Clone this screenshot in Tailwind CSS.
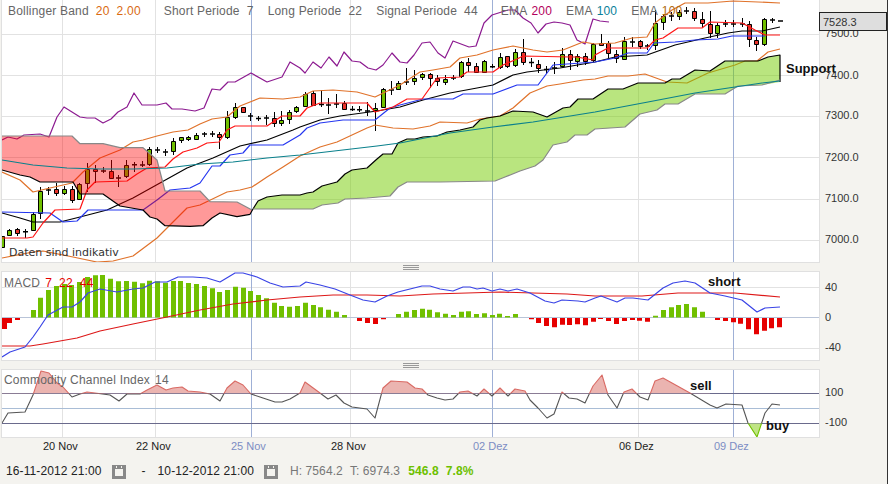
<!DOCTYPE html>
<html>
<head>
<meta charset="utf-8">
<script src="https://cdn.jsdelivr.net/npm/@tailwindcss/browser@4"></script>
</head>
<body>
<div class="w-[895px] h-[484px] flex bg-white overflow-hidden font-['Liberation_Sans',Arial,sans-serif] text-[#333]">
  <div class="w-[888px] h-full flex flex-col bg-[#f4f3ef] border-r border-[#333] pl-[1px]">

    <!-- Price pane -->
    <div class="flex h-[263px]">
      <div class="relative w-[819px] border-l border-r border-b border-[#e0e0e0] bg-white">
        <svg class="block" width="817" height="262" viewBox="2 0 817 262" fill="none" stroke-linejoin="round">
          <path stroke="#e2e2e2" d="M2 34.5H819M2 75.5H819M2 116.5H819M2 157.5H819M2 199.5H819M2 240.5H819M62.5 0V262M155.5 0V262M350.5 0V262M638.5 0V262"/>
          <path stroke="#9fb0d6" d="M251.5 0V262M492.5 0V262M733.5 0V262"/>
          <!-- wicks -->
          <path stroke="#000" d="M9.5 229V236M17.5 228V236M25.5 229V238M33.5 212V231M40.5 187V219M48.5 187V195M56.5 183V196M64.5 186V195M72.5 186V203M79.5 183V200M87.5 163V192M95.5 165V183M103.5 167V173M111.5 160V178M118.5 175V187M126.5 160V178M134.5 162V172M142.5 161V167M149.5 147V166M157.5 147V153M165.5 149V156M173.5 138V155M181.5 137V143M188.5 136V141M196.5 133V140M204.5 132V137M212.5 131V137M219.5 132V149M227.5 111V139M235.5 103V119M250.5 113V121M258.5 116V121M266.5 115V125M274.5 112V127M281.5 111V126M289.5 110V124M296.5 106V113M305.5 92V107M313.5 91V106M321.5 90V107M328.5 98V114M336.5 94V108M344.5 101V110M352.5 106V111M359.5 106V112M367.5 102V116M375.5 103V131M383.5 88V108M391.5 81V95M398.5 81V90M406.5 68V85M414.5 70V85M422.5 73V80M430.5 73V88M437.5 75V86M445.5 75V85M453.5 75V80M461.5 61V78M468.5 58V72M476.5 63V73M484.5 60V73M492.5 64V68M500.5 53V69M507.5 56V68M515.5 49V67M523.5 39V65M531.5 58V67M538.5 60V73M546.5 66V74M554.5 62V74M562.5 48V67M570.5 50V70M577.5 54V67M585.5 53V65M593.5 43V62M601.5 34V46M608.5 41V58M616.5 50V63M624.5 37V60M632.5 37V47M640.5 40V49M647.5 44V50M655.5 10V50M663.5 15V30M671.5 12V21M679.5 10V20M686.5 7V14M694.5 8V21M702.5 12V27M710.5 11V38M717.5 23V38M725.5 20V27M733.5 20V27M742.5 18V27M749.5 21V47M756.5 37V51M764.5 18V46M772.5 18V23"/>
          <!-- dojis -->
          <path stroke="#000" stroke-width="1.5" d="M23 231.7h5M46 190h5M101 171h5M116 178h5M132 164.7h5M140 165h5M155 150h5M163 152h5M202 134h5M210 134h5M248 116h5M256 118.5h5M264 118h5M319 104.5h5M326 105h5M334 104h5M350 109.5h5M357 109.7h5M365 111h5M389 90h5M404 82h5M451 78h5M490 66.7h5M529 62.5h5M544 69.5h5M552 68h5M630 42h5M645 46h5M669 16h5M684 11h5M723 24h5M731 24h5M740 24h5M770 20h5M778 21h5"/>
          <!-- green bodies -->
          <path fill="#70c000" stroke="#000" d="M.5 236.5h4V247.5h-4zM7.5 230.5h4V235.5h-4zM31.5 214.5h4V230.5h-4zM38.5 191.5h4V213.5h-4zM62.5 189.5h4V193.5h-4zM77.5 184.5h4V199.5h-4zM85.5 169.5h4V183.5h-4zM124.5 165.5h4V176.5h-4zM147.5 149.5h4V164.5h-4zM171.5 141.5h4V151.5h-4zM179.5 137.5h4V140.5h-4zM186.5 137.5h4V139.5h-4zM194.5 135.5h4V139.5h-4zM225.5 117.5h4V137.5h-4zM233.5 107.5h4V117.5h-4zM279.5 120.5h4V123.5h-4zM287.5 112.5h4V119.5h-4zM294.5 107.5h4V111.5h-4zM303.5 94.5h4V106.5h-4zM373.5 108.5h4V110.5h-4zM381.5 89.5h4V107.5h-4zM396.5 83.5h4V89.5h-4zM412.5 78.5h4V81.5h-4zM420.5 74.5h4V77.5h-4zM443.5 79.5h4V82.5h-4zM459.5 62.5h4V76.5h-4zM482.5 61.5h4V72.5h-4zM498.5 57.5h4V67.5h-4zM513.5 52.5h4V65.5h-4zM560.5 54.5h4V66.5h-4zM575.5 56.5h4V61.5h-4zM591.5 44.5h4V60.5h-4zM622.5 41.5h4V59.5h-4zM653.5 23.5h4V45.5h-4zM661.5 16.5h4V22.5h-4zM677.5 12.5h4V16.5h-4zM715.5 25.5h4V33.5h-4zM762.5 19.5h4V44.5h-4z"/>
          <!-- red bodies -->
          <path fill="#e8342c" stroke="#000" d="M15.5 229.5h4V233.5h-4zM54.5 189.5h4V193.5h-4zM70.5 189.5h4V200.5h-4zM93.5 169.5h4V171.5h-4zM109.5 171.5h4V178.5h-4zM217.5 134.5h4V137.5h-4zM241.5 107.5h4V112.5h-4zM272.5 118.5h4V123.5h-4zM311.5 93.5h4V105.5h-4zM342.5 103.5h4V109.5h-4zM428.5 74.5h4V78.5h-4zM435.5 78.5h4V81.5h-4zM466.5 62.5h4V65.5h-4zM474.5 66.5h4V72.5h-4zM505.5 56.5h4V66.5h-4zM521.5 52.5h4V62.5h-4zM536.5 64.5h4V68.5h-4zM568.5 54.5h4V60.5h-4zM583.5 56.5h4V61.5h-4zM599.5 43.5h4V45.5h-4zM606.5 43.5h4V53.5h-4zM614.5 54.5h4V58.5h-4zM638.5 41.5h4V46.5h-4zM692.5 11.5h4V18.5h-4zM700.5 19.5h4V23.5h-4zM708.5 24.5h4V33.5h-4zM747.5 24.5h4V39.5h-4zM754.5 40.5h4V44.5h-4z"/>
          <!-- purple -->
          <polyline stroke="#8c1a90" stroke-width="1.2" points="2,140 8,137 17,139 24,135 40,134 49,137 57,117 64,107 80,117 87,118 95,118 103,123 111,119 118,112 127,107 134,93 142,105 157,105 166,103 172,109 182,109 195,111 204,108 212,89 220,90 228,82 235,82 251,73 267,82 282,77 290,62 300,68 305,73 313,62 321,68 329,57 337,66 344,52 352,61 360,62 368,68 376,70 383,65 392,53 400,62 407,63 414,55 422,43 430,42 438,53 445,58 453,41 469,47 476,46 484,23 492,15 508,10 515,10 523,18 531,23 538,33 546,24 554,22 562,23 570,25 577,40 585,44 593,19 600,21 609,22"/>
          <!-- orange upper -->
          <polyline stroke="#e0722a" stroke-width="1.2" points="2,172 20,180 33,192 50,188 72,183 83,172 100,158 120,150 133,142 143,140 157,136 173,132 188,130 200,124 212,119 227,117 240,106 260,98 283,99 300,97 313,91 333,90 357,92 375,97 400,85 420,72 433,70 450,67 460,58 477,55 493,50 513,46 533,50 547,52 563,50 583,42 595,44 615,43 632,38 647,37 655,23 672,10 685,3 708,3 733,1 758,2 780,3"/>
          <!-- orange lower -->
          <polyline stroke="#e0722a" stroke-width="1.2" points="2,258 33,252 43,251 73,257 97,262 113,261 133,256 157,238 187,208 200,205 227,192 240,190 252,187 267,177 283,167 300,156 320,147 337,142 367,128 375,125 393,128 413,129 430,126 440,122 467,123 480,119 500,116 513,108 530,93 547,86 560,84 583,80 595,79 608,76 628,76 645,74 667,82 687,83 708,73 735,65 745,61 757,61 768,52 780,49"/>
          <!-- black -->
          <polyline stroke="#000" stroke-width="1.2" points="2,213 20,218 33,222 60,222 80,217 107,210 133,198 160,183 187,168 213,158 240,146 267,140 293,130 300,127 320,120 340,116 377,111 400,107 423,100 450,93 477,88 493,85 513,75 527,72 560,68 595,62 615,57 647,55 675,45 705,38 728,33 742,31 762,31 780,27"/>
          <!-- blue -->
          <polyline stroke="#2436f0" stroke-width="1.2" points="2,212 50,213 63,222 77,221 88,210 143,210 157,200 170,190 190,188 200,183 212,166 220,166 230,155 243,153 250,145 283,145 300,135 307,128 320,123 343,120 375,120 390,108 400,105 423,99 453,99 463,94 493,94 517,85 538,85 553,65 595,62 615,58 628,53 647,53 654,43 675,42 695,40 718,39 732,36 765,36"/>
          <!-- red -->
          <polyline stroke="#ff1414" stroke-width="1.2" points="2,238 27,238 33,237 43,223 55,210 80,209 87,190 95,182 127,181 137,174 147,168 165,167 173,159 183,152 197,148 207,143 219,142 227,130 235,126 267,126 282,116 300,116 307,108 320,103 343,103 367,103 375,112 393,107 407,99 422,99 437,78 460,77 467,72 493,72 503,65 517,59 523,56 570,57 577,57 593,60 595,55 608,48 647,48 655,40 663,38 678,28 702,28 710,22 742,23 755,30 765,35 780,35"/>
          <!-- red cloud -->
          <path fill="#ff0000" fill-opacity=".4" d="M2 136H72L80 143.7H103L120 147.7H143L148 152L157 160L165 191H200L210 201.7L237 202L252 210L250 214.3L237 216.7L220 213L212 218L203 225.7L190 226.3L165 225.7L157 219L150 217L143 210L120 206L103 194H80L73 182H40L30 177L20 175L2 170Z"/>
          <path stroke="#888" stroke-width="1.2" d="M2 136H72L80 143.7H103L120 147.7H143L148 152L157 160L165 191H200L210 201.7L237 202L252 210"/>
          <path stroke="#000" stroke-width="1.2" d="M2 170L20 175L30 177L40 182H73L80 194H103L120 206L143 210L150 217L157 219L165 225.7L190 226.3L203 225.7L212 218L220 213L237 216.7L250 214.3L253 209"/>
          <!-- green cloud -->
          <path fill="#74cc00" fill-opacity=".5" d="M253 209L258 201L267 197L282 195H300L307 193L313 192L322 186L337 182L345 174L352 170L367 168L377 159L383 154H392L398 143L407 139H415L423 137L437 136L447 132L460 130L473 127L480 120L487 118L500 116L513 111L533 112L547 117L563 108L570 107L578 99L593 99L608 89H623L638 83H665L672 79H680L695 70L710 71L725 61H742L758 61L768 57L780 55V82L762 85L738 86L725 94H695L678 104H665L657 110L640 114L625 127L595 129L587 135H575L567 142L553 145L543 160L535 166L520 171L505 177L495 181L440 182H407L398 187L390 196L367 198L345 199L338 203L322 205L313 209Z"/>
          <path stroke="#000" stroke-width="1.2" d="M253 209L258 201L267 197L282 195H300L307 193L313 192L322 186L337 182L345 174L352 170L367 168L377 159L383 154H392L398 143L407 139H415L423 137L437 136L447 132L460 130L473 127L480 120L487 118L500 116L513 111L533 112L547 117L563 108L570 107L578 99L593 99L608 89H623L638 83H665L672 79H680L695 70L710 71L725 61H742L758 61L768 57L780 55V82"/>
          <path stroke="#888" stroke-width="1.2" d="M780 80L762 85L738 86L725 94H695L678 104H665L657 110L640 114L625 127L595 129L587 135H575L567 142L553 145L543 160L535 166L520 171L505 177L495 181L440 182H407L398 187L390 196L367 198L345 199L338 203L322 205L313 209H253"/>
          <!-- teal -->
          <polyline stroke="#0a808c" stroke-width="1.1" points="2,160 33,165 67,168 100,169 133,169 167,168 200,164 233,162 267,158 300,155 377,146 400,143 450,133 493,127 533,122 595,112 648,102 695,93 735,87 762,83 780,81"/>
        </svg>
        <!-- legend -->
        <div class="absolute left-[6px] top-[4px] flex whitespace-nowrap text-[12px] leading-[15px] tracking-[0.2px] text-[#666]">
          <span>Bollinger Band</span><span class="ml-[7px] text-[#d96a10]">20</span><span class="ml-[7px] text-[#d96a10]">2.00</span>
          <span class="ml-[23px]">Short Periode</span><span class="ml-[7px]">7</span>
          <span class="ml-[14px]">Long Periode</span><span class="ml-[7px]">22</span>
          <span class="ml-[14px]">Signal Periode</span><span class="ml-[7px]">44</span>
          <span class="ml-[23px]">EMA</span><span class="ml-[4px] text-[#b3005c]">200</span>
          <span class="ml-[14px]">EMA</span><span class="ml-[4px] text-[#0a7f9a]">100</span>
          <span class="ml-[14px]">EMA</span><span class="ml-[4px] text-[#b06a10]">100</span>
        </div>
        <div class="absolute left-[7px] top-[246px] font-['DejaVu_Sans',sans-serif] text-[11px] leading-[14px] text-[#333]">Daten sind indikativ</div>
        <div class="absolute left-[784px] top-[61px] font-bold text-[13px] leading-[16px] text-[#111]">Support</div>
      </div>
      <div class="relative flex-1 text-[11px] leading-[13px]">
        <span class="absolute left-[5px] top-[27px]">7500.0</span>
        <span class="absolute left-[5px] top-[69px]">7400.0</span>
        <span class="absolute left-[5px] top-[109px]">7300.0</span>
        <span class="absolute left-[5px] top-[151px]">7200.0</span>
        <span class="absolute left-[5px] top-[192px]">7100.0</span>
        <span class="absolute left-[5px] top-[233px]">7000.0</span>
        <div class="absolute -left-[1px] top-[12px] w-[68px] h-[19px] border border-[#222] bg-[#dedede] pl-[3px] text-[#333] leading-[19px]">7528.3</div>
      </div>
    </div>

    <!-- divider -->
    <div class="w-[819px] h-[8px] flex items-center justify-center">
      <div class="w-[16px] h-[5px] border-y border-[#999] flex items-center"><div class="w-full h-[1px] bg-[#999]"></div></div>
    </div>

    <!-- MACD pane -->
    <div class="flex h-[90px]">
      <div class="relative w-[819px] border border-[#e0e0e0] bg-white">
        <svg class="block" width="817" height="88" viewBox="2 272 817 88" fill="none" stroke-linejoin="round">
          <path stroke="#e2e2e2" d="M2 287.5H819M2 348.5H819M62.5 272V360M155.5 272V360M350.5 272V360M638.5 272V360"/>
          <path stroke="#b9c4d8" d="M2 317.5H819"/>
          <path stroke="#9fb0d6" d="M251.5 272V360M492.5 272V360M733.5 272V360"/>
          <path fill="#70c000" d="M31 310h5V317.5h-5zM38 297.7h5V317.5h-5zM46 290h5V317.5h-5zM54 286h5V317.5h-5zM62 284h5V317.5h-5zM69 285h5V317.5h-5zM77 282h5V317.5h-5zM85 277h5V317.5h-5zM93 275.3h5V317.5h-5zM100 275h5V317.5h-5zM108 278.7h5V317.5h-5zM116 281.3h5V317.5h-5zM124 281h5V317.5h-5zM132 281.7h5V317.5h-5zM140 283.3h5V317.5h-5zM147 280.7h5V317.5h-5zM155 281.3h5V317.5h-5zM163 282.7h5V317.5h-5zM171 281h5V317.5h-5zM178 281h5V317.5h-5zM186 283h5V317.5h-5zM194 284h5V317.5h-5zM202 286h5V317.5h-5zM210 288.3h5V317.5h-5zM217 292h5V317.5h-5zM225 290h5V317.5h-5zM233 286.7h5V317.5h-5zM241 287.7h5V317.5h-5zM248 291h5V317.5h-5zM256 295h5V317.5h-5zM264 298.3h5V317.5h-5zM272 302.7h5V317.5h-5zM279 306h5V317.5h-5zM287 306.7h5V317.5h-5zM295 306h5V317.5h-5zM303 302.7h5V317.5h-5zM311 305h5V317.5h-5zM318 307.3h5V317.5h-5zM326 309.7h5V317.5h-5zM334 311.7h5V317.5h-5zM342 315h5V317.5h-5zM396 314h5V317.5h-5zM404 311.7h5V317.5h-5zM412 310h5V317.5h-5zM420 308.7h5V317.5h-5zM427 309.7h5V317.5h-5zM435 312.3h5V317.5h-5zM443 313.7h5V317.5h-5zM451 315h5V317.5h-5zM459 311.7h5V317.5h-5zM466 311.3h5V317.5h-5zM474 314h5V317.5h-5zM482 313.3h5V317.5h-5zM490 315h5V317.5h-5zM497 313.7h5V317.5h-5zM505 316h5V317.5h-5zM513 314h5V317.5h-5zM653 315.7h5V317.5h-5zM661 310h5V317.5h-5zM669 307.3h5V317.5h-5zM676 305h5V317.5h-5zM684 304h5V317.5h-5zM692 307.3h5V317.5h-5zM700 311.7h5V317.5h-5z"/>
          <path fill="#e60000" d="M2 318H7V329H2zM7 318h5V323h-5zM15 318h5V320h-5zM357 318h5V321h-5zM365 318h5V323h-5zM373 318h5V324h-5zM381 318h5V319.3h-5zM529 318h5V319.3h-5zM536 318h5V323h-5zM544 318h5V326h-5zM552 318h5V327.3h-5zM560 318h5V324.7h-5zM567 318h5V325h-5zM575 318h5V324.3h-5zM583 318h5V325.3h-5zM591 318h5V321.7h-5zM598 318h5V319h-5zM606 318h5V321h-5zM614 318h5V324h-5zM622 318h5V321h-5zM630 318h5V320h-5zM637 318h5V320.7h-5zM645 318h5V321.7h-5zM715 318h5V320h-5zM723 318h5V321h-5zM731 318h5V322.3h-5zM738 318h5V323.7h-5zM746 318h5V329.3h-5zM754 318h5V334.3h-5zM762 318h5V330.7h-5zM769 318h5V328.3h-5zM777 318h5V327.3h-5z"/>
          <polyline stroke="#dd1818" stroke-width="1.2" points="2,346 30,346 43,344 77,338 100,331 133,324 167,317 200,310 233,304 267,300 300,297 333,295 367,295 400,296 433,294 467,293 500,292 533,293 567,294 595,296 642,296 678,293 712,293 735,293 780,297"/>
          <polyline stroke="#3a44e6" stroke-width="1.2" points="2,357 10,352 25,347 33,337 40,327 48,315 63,307 72,307 80,302 88,293 100,289 117,292 133,289 143,288 155,282 167,282 178,277 193,277 207,278 220,282 235,273 243,273 257,277 270,283 283,287 300,286 306,282 320,285 335,289 350,295 363,300 375,302 387,296 398,292 410,289 422,286 430,286 440,289 453,291 463,287 470,287 477,289 483,288 492,291 500,289 508,291 517,289 530,293 545,301 554,303 562,300 578,301 585,302 595,298 601,296 617,302 625,298 633,298 648,300 663,288 673,283 685,281 695,283 710,293 725,296 742,300 757,312 765,308 780,307"/>
        </svg>
        <div class="absolute left-[2px] top-[4px] flex whitespace-nowrap text-[12px] leading-[15px] tracking-[0.2px] text-[#666]">
          <span>MACD</span><span class="ml-[5px] text-[#e60000]">7</span><span class="ml-[7px] text-[#e60000]">22</span><span class="ml-[7px] text-[#e60000]">44</span>
        </div>
        <div class="absolute left-[706px] top-[2px] font-bold text-[13px] leading-[16px] text-[#111]">short</div>
      </div>
      <div class="relative flex-1 text-[11px] leading-[13px]">
        <span class="absolute left-[5px] top-[10px]">40</span>
        <span class="absolute left-[5px] top-[40px]">0</span>
        <span class="absolute left-[5px] top-[70px]">-40</span>
      </div>
    </div>

    <!-- divider -->
    <div class="w-[819px] h-[8px] flex items-center justify-center">
      <div class="w-[16px] h-[5px] border-y border-[#999] flex items-center"><div class="w-full h-[1px] bg-[#999]"></div></div>
    </div>

    <!-- CCI pane -->
    <div class="flex h-[69px]">
      <div class="relative w-[819px] border border-[#e0e0e0] bg-white">
        <svg class="block" width="817" height="67" viewBox="2 370 817 67" fill="none" stroke-linejoin="round">
          <defs>
            <clipPath id="above"><rect x="0" y="360" width="820" height="33.5"/></clipPath>
            <clipPath id="mid"><rect x="0" y="393.5" width="820" height="30"/></clipPath>
            <clipPath id="below"><rect x="0" y="423.5" width="820" height="20"/></clipPath>
          </defs>
          <path stroke="#e2e2e2" d="M62.5 370V437M155.5 370V437M350.5 370V437M638.5 370V437"/>
          <path stroke="#9fb0d6" d="M251.5 370V437M492.5 370V437M733.5 370V437"/>
          <path stroke="#a9bdd6" d="M2 408.5H819"/>
          <path stroke="#6a6a8c" d="M2 393.5H819M2 423.5H819"/>
          <path clip-path="url(#above)" fill="#ebb4b0" d="M2 393.5L2 423 8 413 25 412 33 395 41 371 49 373 57 383 63 387 72 397 80 394 87 392 95 393 110 395 119 401 127 394 140 394 147 390 157 385 166 390 173 388 182 387 188 391 200 392 210 394 220 401 227 388 235 381 243 385 251 394 263 398 275 402 282 402 290 399 300 393 305 382 320 393 328 399 336 395 344 403 352 407 367 409 375 418 383 388 391 381 407 382 415 388 422 389 428 395 437 398 445 400 453 399 460 392 468 391 477 396 484 389 492 396 500 388 508 396 515 389 525 391 530 400 538 408 547 418 554 414 562 392 569 398 577 399 585 403 593 386 602 375 608 395 617 408 624 392 632 389 640 397 648 400 655 381 663 378 672 383 690 393 710 405V393.5Z"/>
          <path clip-path="url(#below)" fill="#bfe484" d="M740 423.5H748L757 437 765 413Z"/>
          <polyline clip-path="url(#mid)" stroke="#555" stroke-width="1.1" points="2,423 8,413 25,412 33,395 41,371 49,373 57,383 63,387 72,397 80,394 87,392 95,393 110,395 119,401 127,394 140,394 147,390 157,385 166,390 173,388 182,387 188,391 200,392 210,394 220,401 227,388 235,381 243,385 251,394 263,398 275,402 282,402 290,399 300,393 305,382 320,393 328,399 336,395 344,403 352,407 367,409 375,418 383,388 391,381 407,382 415,388 422,389 428,395 437,398 445,400 453,399 460,392 468,391 477,396 484,389 492,396 500,388 508,396 515,389 525,391 530,400 538,408 547,418 554,414 562,392 569,398 577,399 585,403 593,386 602,375 608,395 617,408 624,392 632,389 640,397 648,400 655,381 663,378 672,383 690,393 710,405 717,408 726,404 742,405 748,423 757,437 765,413 772,404 780,405"/>
          <polyline clip-path="url(#above)" stroke="#d96a64" stroke-width="1.1" points="2,423 8,413 25,412 33,395 41,371 49,373 57,383 63,387 72,397 80,394 87,392 95,393 110,395 119,401 127,394 140,394 147,390 157,385 166,390 173,388 182,387 188,391 200,392 210,394 220,401 227,388 235,381 243,385 251,394 263,398 275,402 282,402 290,399 300,393 305,382 320,393 328,399 336,395 344,403 352,407 367,409 375,418 383,388 391,381 407,382 415,388 422,389 428,395 437,398 445,400 453,399 460,392 468,391 477,396 484,389 492,396 500,388 508,396 515,389 525,391 530,400 538,408 547,418 554,414 562,392 569,398 577,399 585,403 593,386 602,375 608,395 617,408 624,392 632,389 640,397 648,400 655,381 663,378 672,383 690,393 710,405"/>
          <polyline clip-path="url(#below)" stroke="#70c000" stroke-width="1.1" points="742,405 748,423 757,437 765,413"/>
        </svg>
        <div class="absolute left-[2px] top-[3px] flex whitespace-nowrap text-[12px] leading-[15px] tracking-[0.2px] text-[#666]">
          <span>Commodity Channel Index</span><span class="ml-[5px]">14</span>
        </div>
        <div class="absolute left-[688px] top-[8px] font-bold text-[13px] leading-[16px] text-[#111]">sell</div>
        <div class="absolute left-[764px] top-[48px] font-bold text-[13px] leading-[16px] text-[#111]">buy</div>
      </div>
      <div class="relative flex-1 text-[11px] leading-[13px]">
        <span class="absolute left-[5px] top-[17px]">100</span>
        <span class="absolute left-[5px] top-[47px]">-100</span>
      </div>
    </div>

    <!-- time axis -->
    <div class="relative h-[15px] text-[11px] leading-[13px] text-[#222]">
      <span class="absolute left-[42px] top-[2px]">20 Nov</span>
      <span class="absolute left-[135px] top-[2px]">22 Nov</span>
      <span class="absolute left-[230px] top-[2px] text-[#7c8dc4]">25 Nov</span>
      <span class="absolute left-[330px] top-[2px]">28 Nov</span>
      <span class="absolute left-[472px] top-[2px] text-[#7c8dc4]">02 Dez</span>
      <span class="absolute left-[618px] top-[2px]">06 Dez</span>
      <span class="absolute left-[713px] top-[2px] text-[#7c8dc4]">09 Dez</span>
    </div>

    <!-- footer -->
    <div class="flex items-center h-[17px] mt-[10px] pl-[5px] text-[12px] leading-[15px] tracking-[0.1px] whitespace-nowrap">
      <span class="text-[#222]">16-11-2012 21:00</span>
      <svg class="ml-[11px]" width="14" height="14" viewBox="0 0 14 14"><path fill="#888" d="M0 0h14v14H0z"/><path fill="#f4f3ef" d="M3 4h8v7H3z"/><path fill="#f4f3ef" d="M4 1h1v2H4zM9 1h1v2H9z"/></svg>
      <span class="ml-[15px] text-[#222]">-</span>
      <span class="ml-[12px] text-[#222]">10-12-2012 21:00</span>
      <svg class="ml-[10px]" width="14" height="14" viewBox="0 0 14 14"><path fill="#888" d="M0 0h14v14H0z"/><path fill="#f4f3ef" d="M3 4h8v7H3z"/><path fill="#f4f3ef" d="M4 1h1v2H4zM9 1h1v2H9z"/></svg>
      <span class="ml-[12px] text-[#777]">H: 7564.2</span>
      <span class="ml-[7px] text-[#777]">T: 6974.3</span>
      <span class="ml-[8px] font-bold text-[#6cc000]">546.8</span>
      <span class="ml-[7px] font-bold text-[#6cc000]">7.8%</span>
    </div>
  </div>
</div>
</body>
</html>
